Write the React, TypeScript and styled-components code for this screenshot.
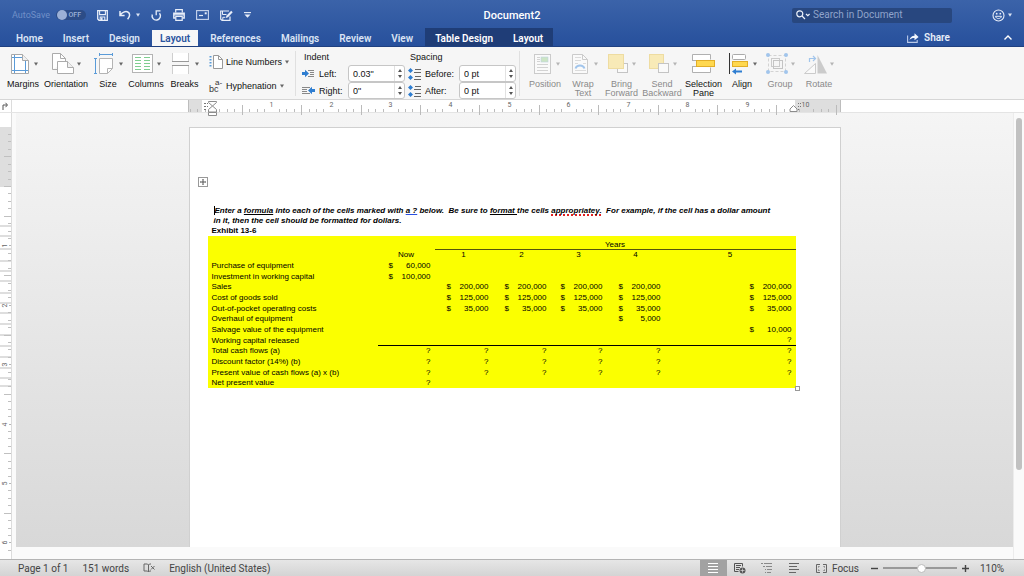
import React from "react";
import styled, { createGlobalStyle, css } from "styled-components";

const GlobalStyle = createGlobalStyle`
  *, *::before, *::after { box-sizing: border-box; }
  html, body { margin: 0; padding: 0; }
  body { font-family: Roboto, "Liberation Sans", sans-serif; font-size: 9px; color: #1c1c1c; }
  button, input { font: inherit; color: inherit; }
  button { border: 0; padding: 0; margin: 0; background: none; cursor: default; }
  svg { display: block; overflow: visible; flex: none; }
`;

const Window = styled.div`
  display: flex;
  flex-direction: column;
  min-height: 100vh;
  background: #fafafa;
`;

/* ---------- header ---------- */

const Header = styled.header`
  background: linear-gradient(#3b63a9, #27509c);
  border-bottom: 1px solid #1f4080;
  color: #fff;
`;

const TitleBar = styled.div`
  display: grid;
  grid-template-columns: 1fr auto 1fr;
  align-items: center;
  height: 29px;
  padding: 1px 12px 0;
`;

const QuickAccess = styled.div`
  display: flex;
  align-items: center;
  gap: 11px;
`;

const AutoSave = styled.label`
  display: flex;
  align-items: center;
  gap: 6px;
  color: #7090c8;
`;

const Switch = styled.span`
  position: relative;
  display: flex;
  align-items: center;
  justify-content: flex-end;
  width: 30px;
  height: 10px;
  padding-right: 5px;
  border-radius: 5px;
  background: #2c4c87;
  color: #9db2d8;
  font-size: 7px;
  font-weight: 500;
  input {
    appearance: none;
    position: absolute;
    left: 1px;
    top: 0;
    width: 10px;
    height: 10px;
    margin: 0;
    border-radius: 5px;
    background: #9bb0d6;
  }
`;

const IconRow = styled.div`
  display: flex;
  align-items: center;
  gap: 11px;
`;

const IconButton = styled.button<{ $gap?: number }>`
  display: flex;
  align-items: center;
  gap: ${(p) => p.$gap ?? 5}px;
`;

const DocTitle = styled.h1`
  margin: 0;
  padding-top: 1px;
  font-size: 11px;
  line-height: 14px;
  font-weight: 500;
`;

const TitleRight = styled.div`
  display: flex;
  align-items: center;
  justify-content: flex-end;
  gap: 40px;
`;

const SearchBox = styled.label`
  display: flex;
  align-items: center;
  gap: 3px;
  width: 160px;
  height: 15px;
  padding: 0 4px;
  border-radius: 2px;
  background: #28477f;
  input {
    flex: 1;
    min-width: 0;
    padding: 0;
    border: 0;
    outline: 0;
    background: none;
    font-size: 10px;
    line-height: 12px;
    &::placeholder { color: #8fa4cb; opacity: 1; }
  }
`;

const TabBar = styled.div`
  display: flex;
  align-items: flex-end;
  height: 17px;
  padding: 0 12px 0 8px;
`;

const Tabs = styled.nav`
  display: flex;
  align-items: flex-end;
  gap: 4px;
  flex: 1;
`;

const tabShape = css`
  height: 16px;
  padding: 0 8px;
  font-size: 10px;
  line-height: 18px;
  font-weight: 600;
  white-space: nowrap;
`;

const Tab = styled.button<{ $active?: boolean }>`
  ${tabShape}
  color: ${(p) => (p.$active ? "#2a549f" : "#dbe4f4")};
  background: ${(p) => (p.$active ? "#f7f7f7" : "none")};
`;

const ContextTabs = styled.div`
  display: flex;
  align-items: flex-end;
  gap: 4px;
  height: 18px;
  padding: 0 2px;
  background: #1f3d77;
  ${Tab} { color: #fff; }
`;

const TabActions = styled.div`
  display: flex;
  align-items: center;
  gap: 54px;
  height: 17px;
`;

const ShareButton = styled.button`
  display: flex;
  align-items: center;
  gap: 5px;
  font-size: 10px;
  font-weight: 600;
  color: #e8eef9;
`;

/* ---------- ribbon ---------- */

const Ribbon = styled.div`
  display: flex;
  height: 53px;
  padding-left: 4px;
  background: #f6f6f6;
  border-bottom: 1px solid #d6d6d6;
  font-family: "Liberation Sans", Arial, sans-serif;
`;

const RibbonGroup = styled.div`
  display: flex;
`;

const BigButton = styled.button<{ $w: number; $dim?: boolean }>`
  display: flex;
  flex-direction: column;
  align-items: center;
  width: ${(p) => p.$w}px;
  padding-top: 6px;
  line-height: 9px;
  color: ${(p) => (p.$dim ? "#8a8a8a" : "#111")};
  white-space: nowrap;
`;

const BigIcon = styled.span<{ $dim?: boolean }>`
  display: flex;
  align-items: center;
  gap: 3px;
  height: 22px;
  margin-bottom: 5px;
  opacity: ${(p) => (p.$dim ? 0.45 : 1)};
`;

const SmallStack = styled.div`
  display: flex;
  flex-direction: column;
  gap: 11px;
  padding: 8px 0 0 6px;
  width: 92px;
`;

const SmallButton = styled.button`
  display: flex;
  align-items: center;
  gap: 3px;
  height: 13px;
  white-space: nowrap;
  color: #111;
`;

const Divider = styled.div`
  width: 1px;
  margin: 4px 6px 3px 0;
  background: #e0e0e0;
`;

const FieldGroup = styled.fieldset`
  min-width: 0;
  margin: 0 3px 0 0;
  padding: 0;
  border: 0;
  legend {
    padding: 4px 0 0 2px;
    height: 18px;
    line-height: 12px;
    color: #111;
  }
`;

const Field = styled.label<{ $label: number }>`
  display: grid;
  grid-template-columns: 14px ${(p) => p.$label}px 57px;
  column-gap: 3px;
  align-items: center;
  height: 17px;
  color: #111;
`;

const Spinner = styled.span`
  display: flex;
  height: 17px;
  border: 1px solid #c6c6c6;
  border-radius: 3px;
  background: #fff;
  input {
    flex: 1;
    min-width: 0;
    padding: 1px 0 0 4px;
    border: 0;
    outline: 0;
    background: none;
  }
`;

const Steps = styled.span`
  display: flex;
  flex-direction: column;
  justify-content: space-evenly;
  align-items: center;
  width: 10px;
  border-left: 1px solid #e2e2e2;
`;

/* ---------- rulers and canvas ---------- */

const RulerRow = styled.div`
  position: relative;
  z-index: 1;
  display: flex;
  height: 13px;
  background: #fff;
  border-bottom: 1px solid #e4e4e4;
`;

const TabStop = styled.button`
  width: 12px;
  border-right: 1px solid #dcdcdc;
  display: flex;
  align-items: center;
  padding-left: 2px;
`;

const RulerTrack = styled.div`
  flex: 1;
  display: flex;
  justify-content: center;
  padding: 0 11px 0 4px;
`;

const Workspace = styled.main`
  display: flex;
  flex: 1;
  min-height: 446px;
`;

const SideRuler = styled.div`
  width: 12px;
  padding-top: 14px;
  background: #fff;
  border-right: 1px solid #dcdcdc;
`;

const Canvas = styled.div`
  flex: 1;
  display: flex;
  justify-content: center;
  margin: 0 0 12px 4px;
  padding-top: 14px;
  background: linear-gradient(#f5f5f5, #d8d8d8);
  overflow: hidden;
`;

const Page = styled.article`
  width: 652px;
  padding: 78px 44px 0 18px;
  background: #fff;
  border: 1px solid #d0d0d0;
  border-bottom: 0;
  font-family: "Liberation Sans", Arial, sans-serif;
  font-size: 8px;
  line-height: 10px;
  color: #000;
`;

const Intro = styled.p`
  margin: 0 0 0 6px;
  font-weight: 700;
  font-style: italic;
  white-space: pre-wrap;
`;

const Caret = styled.span`
  border-left: 1px solid #000;
`;

const Mark = styled.span<{ $line: string }>`
  text-decoration: ${(p) => p.$line};
  text-decoration-skip-ink: none;
`;

const Exhibit = styled.h2`
  margin: 0 0 0 4px;
  font-size: 8px;
  line-height: 10px;
  font-weight: 700;
`;

const TableFrame = styled.div`
  position: relative;
`;

const MoveHandle = styled.button`
  position: absolute;
  left: -10px;
  top: -59px;
  display: flex;
`;

const SizeHandle = styled.span`
  position: absolute;
  right: -4px;
  bottom: -3px;
  width: 5px;
  height: 5px;
  border: 1px solid #999;
  background: #fff;
`;

const Sheet = styled.table`
  width: 588px;
  table-layout: fixed;
  border-collapse: collapse;
  background: #fbff00;
  line-height: 9px;
  th, td { padding: 0 4px; font-weight: 400; white-space: nowrap; }
  tr { height: 11px; }
  thead tr:first-child { height: 13px; vertical-align: bottom; }
  tbody tr:nth-child(3n + 2) { height: 10px; }
`;

const Label = styled.th`
  text-align: left;
`;

const Head = styled.th<{ $rule?: boolean }>`
  text-align: center;
  border-bottom: ${(p) => (p.$rule ? "1px solid #55550a" : "0")};
`;

const Cell = styled.td<{ $rule?: boolean }>`
  text-align: right;
  border-bottom: ${(p) => (p.$rule ? "1px solid #000" : "0")};
`;

const Money = styled.span`
  display: flex;
  justify-content: space-between;
  width: 42px;
  margin-left: auto;
`;

const ScrollTrack = styled.div`
  width: 11px;
  padding: 5px 2px 89px;
  background: #fafafa;
  border-left: 1px solid #ececec;
`;

const ScrollThumb = styled.div`
  width: 6px;
  height: 100%;
  border-radius: 3px;
  background: #c1c1c1;
`;

/* ---------- status bar ---------- */

const StatusBar = styled.footer`
  display: flex;
  align-items: center;
  height: 17px;
  padding: 0 18px;
  border-top: 1px solid #b4b4b4;
  background: linear-gradient(#e6e6e6, #d4d4d4);
  font-size: 10px;
  color: #444;
  white-space: nowrap;
`;

const StatusLeft = styled.div`
  display: flex;
  align-items: center;
  gap: 14px;
  flex: 1;
`;

const ViewButton = styled.button<{ $on?: boolean }>`
  display: flex;
  align-items: center;
  justify-content: center;
  width: 27px;
  height: 16px;
  background: ${(p) => (p.$on ? "#a2a2a2" : "none")};
`;

const FocusButton = styled.button`
  display: flex;
  align-items: center;
  gap: 5px;
  margin: 0 12px 0 8px;
`;

const Zoom = styled.div`
  display: flex;
  align-items: center;
  gap: 5px;
  input {
    appearance: none;
    width: 74px;
    height: 10px;
    margin: 0;
    background: linear-gradient(#999, #999) center / 100% 2px no-repeat;
  }
  input::-webkit-slider-thumb {
    appearance: none;
    width: 9px;
    height: 9px;
    border-radius: 50%;
    background: #fff;
    border: 1px solid #bbb;
  }
`;

const ZoomValue = styled.span`
  width: 26px;
  margin-left: 6px;
`;

/* ---------- icons ---------- */

const Arrow = ({ color = "#666" }: { color?: string }) => (
  <svg width="4" height="4" viewBox="0 0 4 4"><path d="M0 .5h4L2 3.7z" fill={color} /></svg>
);

const Svg = ({ w, h, children }: { w: number; h: number; children: React.ReactNode }) => (
  <svg width={w} height={h} viewBox={`0 0 ${w} ${h}`} fill="none" aria-hidden="true">{children}</svg>
);

const SaveIcon = () => (
  <Svg w={11} h={11}>
    <path d="M.7.7h9.6v9.6H2L.7 9z" stroke="#e8eef9" strokeWidth="1.3" />
    <path d="M2.6 1v3.6h5.8V1M3.2 10V7h4.6v3" stroke="#e8eef9" strokeWidth="1.1" />
    <path d="M4 7.4h1.6V10H4z" fill="#e8eef9" />
  </Svg>
);
const UndoIcon = () => (
  <Svg w={12} h={10}>
    <path d="M1 1v4.500h4.600M1.200 5.200C3 2.400 6.400.9 8.800 2c2.600 1.200 2.300 4.600-.2 7.300" stroke="#e8eef9" strokeWidth="1.500" />
  </Svg>
);
const RedoIcon = () => (
  <Svg w={11} h={11}>
    <path d="M1.300 4.500A4.200 4.200 0 1 0 8.500 3.200" stroke="#e8eef9" strokeWidth="1.400" />
    <path d="M9.500.9H5.200v4.300" stroke="#e8eef9" strokeWidth="1.300" />
  </Svg>
);
const PrintIcon = () => (
  <Svg w={12} h={12}>
    <path d="M2.700 3.500V.7h6.600v2.800" stroke="#e8eef9" strokeWidth="1.200" />
    <path d="M2.500 9H.8V4.200h10.400V9H9.500" stroke="#e8eef9" strokeWidth="1.400" />
    <path d="M1 5.800h10" stroke="#e8eef9" strokeWidth="1.200" />
    <path d="M2.800 7.300h6.400v4H2.800z" stroke="#e8eef9" strokeWidth="1.200" />
  </Svg>
);
const MailIcon = () => (
  <Svg w={13} h={10}>
    <rect x=".6" y=".6" width="11.800" height="8.800" stroke="#c9d6ee" strokeWidth="1.100" />
    <path d="M3 5.500h4" stroke="#e8eef9" strokeWidth="1.200" />
    <path d="M8.700 2.300h2v2h-2z" fill="#e8eef9" />
  </Svg>
);
const EditIcon = () => (
  <Svg w={13} h={11}>
    <path d="M9 1H.7v8.300L2 10.300h8V6.500" stroke="#e8eef9" strokeWidth="1.200" />
    <path d="M2.500 1v3.500h4M2.800 10V7.300h2.500" stroke="#e8eef9" />
    <path d="M5.800 8l.6-2.300L11.200.8l1.500 1.500L8 7.200z" fill="#e8eef9" />
  </Svg>
);
const CustomizeIcon = () => (
  <Svg w={7} h={6}><path d="M0 .6h7" stroke="#e8eef9" strokeWidth="1.100" /><path d="M.5 2.400h6L3.500 5.800z" fill="#e8eef9" /></Svg>
);
const SearchIcon = () => (
  <Svg w={14} h={10}>
    <circle cx="3.800" cy="3.800" r="3" stroke="#eef3fb" strokeWidth="1.200" />
    <path d="M6 6l3 3M10 4l1.800 1.600L13.600 4" stroke="#eef3fb" strokeWidth="1.200" />
  </Svg>
);
const SmileIcon = () => (
  <Svg w={13} h={13}>
    <circle cx="6.500" cy="6.500" r="5.500" stroke="#e8eef9" strokeWidth="1.100" />
    <path d="M3.500 7.300c.6 3 5.400 3 6 0z" stroke="#e8eef9" />
    <circle cx="4.700" cy="4.700" r=".9" fill="#e8eef9" /><circle cx="8.300" cy="4.700" r=".9" fill="#e8eef9" />
  </Svg>
);
const ShareIcon = () => (
  <Svg w={12} h={10}>
    <path d="M.6 2.500v6.900h9.600V7" stroke="#b9c9e8" strokeWidth="1.100" />
    <path d="M2.500 7C3 4.500 4.800 2.800 7.500 2.700V.3L11.600 4 7.500 7.300V5C5.500 4.900 4 5.500 2.500 7z" fill="#f2f6fd" />
  </Svg>
);

const MarginsIcon = () => (
  <Svg w={22} h={22}>
    <path d="M2.500 1.500h11l6 6v13h-17z" fill="#fff" stroke="#a8a8a8" />
    <path d="M13.500 1.500v6h6" fill="#f0f0f0" stroke="#a8a8a8" />
    <path d="M5.500 2v18M3 4.500h10M3 17.500h16M16.500 8v12" stroke="#5a9bd8" />
  </Svg>
);
const OrientationIcon = () => (
  <Svg w={22} h={22}>
    <path d="M.5 16.500V.5h8l5 5v3" fill="#fff" />
    <path d="M5.500 16.500h-5V.5h8l5 5v3M8.500.5v5h5" stroke="#ababab" />
    <path d="M5.500 8.500h10l6 6v6h-16z" fill="#fff" stroke="#ababab" />
    <path d="M15.500 8.500v6h6" fill="#f0f0f0" stroke="#ababab" />
  </Svg>
);
const SizeIcon = () => (
  <Svg w={22} h={22}>
    <path d="M5.500 5.500h13v10l-5 5h-8z" fill="#fff" stroke="#b4b4b4" />
    <path d="M13.500 20.500v-5h5" stroke="#b4b4b4" />
    <path d="M5 1.500h14M5.500 0v3M18.500 0v3M1.500 5v15M0 5.500h3M0 20.500h3" stroke="#5a9bd8" />
  </Svg>
);
const ColumnsIcon = () => (
  <Svg w={22} h={22}>
    <rect x=".5" y="1.500" width="20" height="18" fill="#fff" stroke="#b4b4b4" />
    <path d="M3 4.500h6M12 4.500h6M3 7.500h6M12 7.500h6M3 10.500h6M12 10.500h6M3 13.500h6M12 13.500h6M3 16.500h6M12 16.500h6" stroke="#7fce90" />
  </Svg>
);
const BreaksIcon = () => (
  <Svg w={22} h={22}>
    <path d="M2.500 0v8.500h16V0M2.500 21v-8.500h16V21" fill="#fff" />
    <path d="M2.500 0v8M18.500 0v8M2.500 13v8M18.500 13v8" stroke="#cfcfcf" />
    <path d="M2 8.500h17M2 12.500h17" stroke="#999" />
  </Svg>
);
const LineNumbersIcon = () => (
  <Svg w={14} h={14}>
    <path d="M4.500.5h5l4 4v9h-9z" fill="#fff" stroke="#999" /><path d="M9.500.5v4h4" stroke="#999" />
    <path d="M1.500 1v12" stroke="#5a9bd8" strokeWidth="2" strokeDasharray="1.500 1.500" />
  </Svg>
);
const HyphenIcon = () => (
  <Svg w={14} h={13}>
    <text x="0" y="13" fontSize="9" fill="#333">bc</text>
    <text x="6" y="6" fontSize="8" fill="#333">a-</text>
  </Svg>
);
const IndentLeftIcon = () => (
  <Svg w={13} h={9}>
    <path d="M0 3h3V.8l4 3.700L3 8.200V6H0z" fill="#2f7ed1" />
    <path d="M6 1.500h6M8 3.500h4M8 5.500h4M6 7.500h6" stroke="#888" />
  </Svg>
);
const IndentRightIcon = () => (
  <Svg w={13} h={9}>
    <path d="M0 1.500h8M0 3.500h5M0 5.500h5M0 7.500h8" stroke="#888" />
    <path d="M13 3h-3V.8L6 4.500l4 3.700V6h3z" fill="#2f7ed1" />
  </Svg>
);
const SpacingIcon = () => (
  <Svg w={13} h={12}>
    <path d="M2.500 0L5 2.500 2.500 5 0 2.500zM2.500 7L5 9.500 2.500 12 0 9.500z" fill="#2f7ed1" />
    <path d="M7 1.500h6M6 4.500h7M7 8.500h6M6 11.500h7" stroke="#666" />
  </Svg>
);
const PositionIcon = () => (
  <Svg w={22} h={22}>
    <rect x="3.500" y="1.500" width="16" height="19" fill="#fff" stroke="#999" />
    <rect x="10" y="4" width="7" height="5" fill="#9ad28c" stroke="#7fa8c8" strokeWidth=".6" />
    <path d="M6 4.500h3M6 6.500h3M6 8.500h3M6 11.500h11M6 14.500h11M6 17.500h11" stroke="#aaa" />
  </Svg>
);
const WrapIcon = () => (
  <Svg w={22} h={22}>
    <path d="M3.500 1.500h10l5 5v14h-15z" fill="#fff" stroke="#999" /><path d="M13.500 1.500v5h5" stroke="#999" />
    <path d="M6 4.500h6M6 7.500h6M6 10.500h3M14 10.500h3M6 17.500h11" stroke="#bbb" />
    <path d="M6.500 15.500c1.500-4 7.500-4 9 0" stroke="#3b8ae0" strokeWidth="2" />
  </Svg>
);
const BringIcon = () => (
  <Svg w={22} h={22}>
    <rect x="10.500" y="10.500" width="10" height="9" fill="#fff" stroke="#888" />
    <rect x="1.500" y="1.500" width="15" height="14" fill="#fbdc6c" stroke="#e6bd3c" />
  </Svg>
);
const SendIcon = () => (
  <Svg w={22} h={22}>
    <rect x="1.500" y="1.500" width="14" height="14" fill="#fbdc6c" stroke="#e6bd3c" />
    <rect x="10.500" y="10.500" width="10" height="9" fill="#fff" stroke="#888" />
  </Svg>
);
const PaneIcon = () => (
  <Svg w={24} h={22}>
    <path d="M.5 7.500v-6h18v5M.5 13.500v6h18v-5" fill="#fff" stroke="#b0b0b0" />
    <path d="M0 7.500h5M0 13.500h5" stroke="#b0b0b0" />
    <rect x="4.500" y="7.500" width="18" height="6" fill="#ffd84f" stroke="#e2ae27" />
  </Svg>
);
const AlignIcon = () => (
  <Svg w={22} h={22}>
    <path d="M1.500 0v21" stroke="#333" />
    <rect x="4.500" y="1.500" width="13" height="5" rx="1" fill="#fff" stroke="#aaa" />
    <rect x="4.500" y="8.500" width="15" height="5" fill="#ffd84f" stroke="#e2ae27" />
    <path d="M4 18.500L8 15.500V17.500h6v2H8v2z" fill="#2f7ed1" />
  </Svg>
);
const GroupIcon = () => (
  <Svg w={22} h={22}>
    <rect x="2.500" y="2.500" width="17" height="16" stroke="#aaa" strokeDasharray="3 2" />
    <rect x="5.500" y="5.500" width="8" height="8" stroke="#999" /><rect x="7.500" y="7.500" width="9" height="8" stroke="#888" />
    <g fill="#3b8ae0"><circle cx="2" cy="2" r="2" /><circle cx="20" cy="2" r="2" /><circle cx="2" cy="19" r="2" /><circle cx="20" cy="19" r="2" /></g>
  </Svg>
);
const RotateIcon = () => (
  <Svg w={22} h={22}>
    <path d="M12.500 2v18.500H22z" fill="#999" /><path d="M10.500 10.500v10H-.5z" fill="#fff" stroke="#999" />
    <path d="M4.500 9V5.500H10M8 3l2.500 2.500L8 8" stroke="#3b8ae0" strokeWidth="1.200" />
  </Svg>
);
const BookIcon = () => (
  <Svg w={12} h={10}>
    <path d="M1 1h3.500L5.500 2v7l-1-1H1zM5.500 2l1-1H8M5.500 9l1-1H8" stroke="#666" />
    <path d="M8 3l3.500 3.500M11.500 3L8 6.500" stroke="#666" />
  </Svg>
);

/* ---------- rulers ---------- */

const INCH = 59.4;
const eighths = (from: number, to: number) =>
  Array.from({ length: to - from + 1 }, (_, i) => from + i);

const HorizontalRuler = () => (
  <svg width="653" height="12" viewBox="0 0 653 12" fontSize="7" fill="#666" textAnchor="middle">
    <path d="M0 0h14v12H0zM607 0h46v12h-46z" fill="#dedede" />
    <path d="M.5 0v12M652.500 0v12" stroke="#bdbdbd" />
    {eighths(-3, 84).map((n) => {
      const x = Math.round(24 + (n * INCH) / 8) + 0.5;
      if (n % 8 === 0)
        return n > 0 ? <text key={n} x={n === 80 ? x - 1 : x} y="7">{n / 8}</text> : null;
      return <path key={n} d={n % 4 === 0 ? `M${x} 5v10` : `M${x} 9v3`} stroke="#bbb" />;
    })}
    <g fill="#777"><path d="M16 3h2v1h-2zM16 6h2v1h-2zM16 9h2v1h-2zM19 3h1v1h-1zM19 6h1v1h-1zM610 3h1v1h-1zM612 3h1v1h-1zM610 6h1v1h-1zM612 6h1v1h-1zM610 9h1v1h-1z" /></g>
    <path d="M20.500 1.500h8v1l-4 3.500-4-3.500zM20.500 12V9.500l4-3.500 4 3.500V12zM20.500 12.500h8v3h-8zM602 11.500V9l3.500-3.500L609 9v2.500z" fill="#fff" stroke="#8c8c8c" />
  </svg>
);

const ROW_MARKS = [99, 109, 122, 134, 144, 154, 166, 176, 186, 197, 208, 219, 230, 241, 251, 259];

const VerticalRuler = () => (
  <svg width="11" height="420" viewBox="0 0 11 420" fontSize="7" fill="#666" textAnchor="middle">
    <path d="M0 0h11v60H0z" fill="#dedede" />
    {ROW_MARKS.map((y) => <path key={y} d={`M0 ${y}h11`} stroke="#dedede" strokeWidth="2" />)}
    {eighths(-7, 49).map((n) => {
      const y = Math.round(60 + (n * INCH) / 8) - 0.5;
      if (n % 8 === 0 && n > 0)
        return (
          <g key={n}>
            <text transform={`translate(7 ${y}) rotate(-90)`}>{n / 8}</text>
            <path d={`M9 ${y}h2`} stroke="#b5b5b5" />
          </g>
        );
      return <path key={n} d={n % 4 === 0 ? `M4 ${y}h7` : `M8 ${y}h3`} stroke="#c0c0c0" />;
    })}
  </svg>
);

/* ---------- data ---------- */

const YEARS = ["1", "2", "3", "4", "5"];
const COLUMNS = [170, 57, 58, 58, 56, 58, 131];
const all = (v: string) => ["", v, v, v, v, v];

const ROWS: { label: string; values: string[] }[] = [
  { label: "Purchase of equipment", values: ["60,000", "", "", "", "", ""] },
  { label: "Investment in working capital", values: ["100,000", "", "", "", "", ""] },
  { label: "Sales", values: all("200,000") },
  { label: "Cost of goods sold", values: all("125,000") },
  { label: "Out-of-pocket operating costs", values: all("35,000") },
  { label: "Overhaul of equipment", values: ["", "", "", "", "5,000", ""] },
  { label: "Salvage value of the equipment", values: ["", "", "", "", "", "10,000"] },
  { label: "Working capital released", values: ["", "", "", "", "", "?"] },
  { label: "Total cash flows (a)", values: ["?", "?", "?", "?", "?", "?"] },
  { label: "Discount factor (14%) (b)", values: ["?", "?", "?", "?", "?", "?"] },
  { label: "Present value of cash flows (a) x (b)", values: ["?", "?", "?", "?", "?", "?"] },
  { label: "Net present value", values: ["?", "", "", "", "", ""] },
];

type Tool = { label: string[]; w: number; icon: React.ReactNode; dim?: boolean; plain?: boolean };

const PAGE_TOOLS: Tool[] = [
  { label: ["Margins"], w: 38, icon: <MarginsIcon /> },
  { label: ["Orientation"], w: 48, icon: <OrientationIcon /> },
  { label: ["Size"], w: 36, icon: <SizeIcon /> },
  { label: ["Columns"], w: 40, icon: <ColumnsIcon /> },
  { label: ["Breaks"], w: 37, icon: <BreaksIcon /> },
];

const ARRANGE_TOOLS: Tool[] = [
  { label: ["Position"], w: 38, icon: <PositionIcon />, dim: true },
  { label: ["Wrap", "Text"], w: 38, icon: <WrapIcon />, dim: true },
  { label: ["Bring", "Forward"], w: 39, icon: <BringIcon />, dim: true },
  { label: ["Send", "Backward"], w: 42, icon: <SendIcon />, dim: true },
  { label: ["Selection", "Pane"], w: 41, icon: <PaneIcon />, plain: true },
  { label: ["Align"], w: 36, icon: <AlignIcon /> },
  { label: ["Group"], w: 40, icon: <GroupIcon />, dim: true },
  { label: ["Rotate"], w: 38, icon: <RotateIcon />, dim: true },
];

const Tools = ({ items }: { items: Tool[] }) => (
  <RibbonGroup>
    {items.map((t) => (
      <BigButton key={t.label[0]} $w={t.w} $dim={t.dim}>
        <BigIcon $dim={t.dim}>{t.icon}{!t.plain && <Arrow />}</BigIcon>
        {t.label.map((l) => <span key={l}>{l}</span>)}
      </BigButton>
    ))}
  </RibbonGroup>
);

const SpinField = ({ label, value, width, icon }: { label: string; value: string; width: number; icon: React.ReactNode }) => (
  <Field $label={width}>
    {icon}
    <span>{label}</span>
    <Spinner>
      <input defaultValue={value} />
      <Steps>
        <button aria-label="Increase"><Svg w={4} h={3}><path d="M0 3h4L2 0z" fill="#555" /></Svg></button>
        <button aria-label="Decrease"><Svg w={4} h={3}><path d="M0 0h4L2 3z" fill="#555" /></Svg></button>
      </Steps>
    </Spinner>
  </Field>
);

export default function App() {
  return (
    <Window>
      <GlobalStyle />
      <Header>
        <TitleBar>
          <QuickAccess>
            <AutoSave>
              AutoSave
              <Switch><input type="checkbox" role="switch" />OFF</Switch>
            </AutoSave>
            <IconRow>
              <IconButton aria-label="Save"><SaveIcon /></IconButton>
              <IconButton aria-label="Undo"><UndoIcon /><Arrow color="#dbe4f4" /></IconButton>
              <IconButton aria-label="Redo"><RedoIcon /></IconButton>
              <IconButton aria-label="Print"><PrintIcon /></IconButton>
              <IconButton aria-label="Mail"><MailIcon /></IconButton>
              <IconButton aria-label="Edit"><EditIcon /></IconButton>
              <IconButton aria-label="Customize toolbar"><CustomizeIcon /></IconButton>
            </IconRow>
          </QuickAccess>
          <DocTitle>Document2</DocTitle>
          <TitleRight>
            <SearchBox><SearchIcon /><input aria-label="Search in Document" placeholder="Search in Document" /></SearchBox>
            <IconButton $gap={3} aria-label="Feedback"><SmileIcon /><Arrow color="#dbe4f4" /></IconButton>
          </TitleRight>
        </TitleBar>
        <TabBar>
          <Tabs>
            {["Home", "Insert", "Design", "Layout", "References", "Mailings", "Review", "View"].map((t) => (
              <Tab key={t} $active={t === "Layout"}>{t}</Tab>
            ))}
            <ContextTabs><Tab>Table Design</Tab><Tab>Layout</Tab></ContextTabs>
          </Tabs>
          <TabActions>
            <ShareButton><ShareIcon />Share</ShareButton>
            <IconButton aria-label="Collapse ribbon">
              <Svg w={8} h={5}><path d="M.5 4.500L4 1l3.500 3.500" stroke="#fff" strokeWidth="1.400" /></Svg>
            </IconButton>
          </TabActions>
        </TabBar>
      </Header>

      <Ribbon>
        <Tools items={PAGE_TOOLS} />
        <SmallStack>
          <SmallButton><LineNumbersIcon />Line Numbers<Arrow /></SmallButton>
          <SmallButton><HyphenIcon />Hyphenation<Arrow /></SmallButton>
        </SmallStack>
        <Divider />
        <FieldGroup>
          <legend>Indent</legend>
          <SpinField label="Left:" value={'0.03"'} width={26} icon={<IndentLeftIcon />} />
          <SpinField label="Right:" value={'0"'} width={26} icon={<IndentRightIcon />} />
        </FieldGroup>
        <FieldGroup>
          <legend>Spacing</legend>
          <SpinField label="Before:" value="0 pt" width={31} icon={<SpacingIcon />} />
          <SpinField label="After:" value="0 pt" width={31} icon={<SpacingIcon />} />
        </FieldGroup>
        <Divider />
        <Tools items={ARRANGE_TOOLS} />
      </Ribbon>

      <RulerRow>
        <TabStop aria-label="Tab stop">
          <Svg w={6} h={8}><path d="M1 8V3h4M3.500.8L5.500 3l-2 2.200" stroke="#555" /></Svg>
        </TabStop>
        <RulerTrack><HorizontalRuler /></RulerTrack>
      </RulerRow>

      <Workspace>
        <SideRuler><VerticalRuler /></SideRuler>
        <Canvas>
          <Page>
            <Intro>
              <Caret />Enter a <Mark $line="underline">formula</Mark> into each of the cells marked with{" "}
              <Mark $line="underline #2a50e0">a ?</Mark> below.{"  "}Be sure to{" "}
              <Mark $line="underline">format </Mark>the cells{" "}
              <Mark $line="underline dotted #e02020 2px">appropriatey.</Mark>
              {"  "}For example, if the cell has a dollar amount
              <br />
              in it, then the cell should be formatted for dollars.
            </Intro>
            <Exhibit>Exhibit 13-6</Exhibit>
            <TableFrame>
              <MoveHandle aria-label="Move table">
                <Svg w={10} h={10}>
                  <rect x=".5" y=".5" width="9" height="9" fill="#fff" stroke="#999" />
                  <path d="M5 2v6M2 5h6" stroke="#555" />
                  <path d="M4 2.500h2M4 7.500h2M2.500 4v2M7.500 4v2" stroke="#999" />
                </Svg>
              </MoveHandle>
              <Sheet>
                <colgroup>{COLUMNS.map((w, i) => <col key={i} width={w} />)}</colgroup>
                <thead>
                  <tr><Head /><Head /><Head $rule colSpan={5}>Years</Head></tr>
                  <tr><Head /><Head scope="col">Now</Head>{YEARS.map((y) => <Head key={y} scope="col">{y}</Head>)}</tr>
                </thead>
                <tbody>
                  {ROWS.map((r) => (
                    <tr key={r.label}>
                      <Label scope="row">{r.label}</Label>
                      {r.values.map((v, i) => (
                        <Cell key={i} $rule={r.label === "Working capital released"}>
                          {v.length > 1 ? <Money><span>$</span><span>{v}</span></Money> : v}
                        </Cell>
                      ))}
                    </tr>
                  ))}
                </tbody>
              </Sheet>
              <SizeHandle />
            </TableFrame>
          </Page>
        </Canvas>
        <ScrollTrack><ScrollThumb /></ScrollTrack>
      </Workspace>

      <StatusBar>
        <StatusLeft>
          <span>Page 1 of 1</span>
          <span>151 words</span>
          <IconButton aria-label="Proofing"><BookIcon /></IconButton>
          <span>English (United States)</span>
        </StatusLeft>
        <ViewButton $on aria-label="Print layout">
          <Svg w={10} h={10}><path d="M0 .5h10M0 3.500h10M0 6.500h10M0 9.500h10" stroke="#fff" /></Svg>
        </ViewButton>
        <ViewButton aria-label="Web layout">
          <Svg w={12} h={11}>
            <path d="M.5.5h8v3M.5.5v8h4M2 2.500h5M2 4.500h4M2 6.500h3" stroke="#555" />
            <circle cx="8.500" cy="7.500" r="3" fill="#555" /><path d="M8.500 5.500v4M6.500 7.500h4" stroke="#ddd" strokeWidth=".7" />
          </Svg>
        </ViewButton>
        <ViewButton aria-label="Outline">
          <Svg w={12} h={10}><path d="M0 .5h2M3 .5h8M2 3.500h2M5 3.500h6M4 6.500h1M6 6.500h5M4 9.500h1M6 9.500h4" stroke="#888" /></Svg>
        </ViewButton>
        <ViewButton aria-label="Draft">
          <Svg w={10} h={10}><path d="M0 .5h10M0 3.500h8M0 6.500h10M0 9.500h7" stroke="#666" /></Svg>
        </ViewButton>
        <FocusButton>
          <Svg w={11} h={9}><path d="M4 .5H.5v8H4M7 .5h3.500v8H7" stroke="#666" /><path d="M2.500 3.500v-1h1M8.500 3.500v-1h-1M2.500 5.500v1h1M8.500 5.500v1h-1" stroke="#777" /></Svg>
          Focus
        </FocusButton>
        <Zoom>
          <IconButton aria-label="Zoom out"><Svg w={7} h={7}><path d="M0 3.500h7" stroke="#444" strokeWidth="1.400" /></Svg></IconButton>
          <input type="range" aria-label="Zoom" min="0" max="100" defaultValue="52" />
          <IconButton aria-label="Zoom in"><Svg w={7} h={7}><path d="M0 3.500h7M3.500 0v7" stroke="#444" strokeWidth="1.400" /></Svg></IconButton>
          <ZoomValue>110%</ZoomValue>
        </Zoom>
      </StatusBar>
    </Window>
  );
}
